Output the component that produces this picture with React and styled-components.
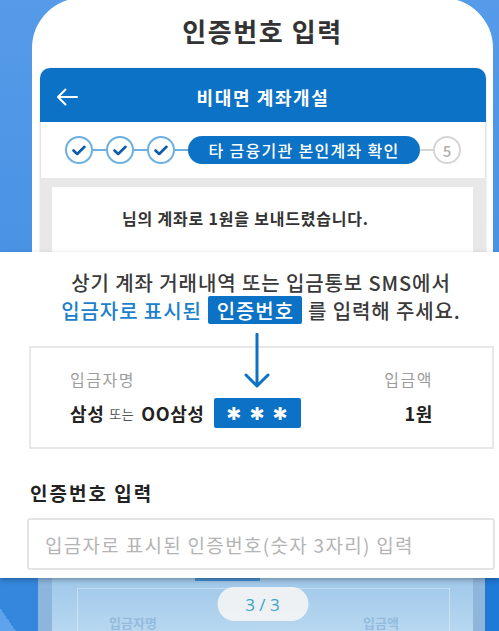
import React from 'react';
import styled, { createGlobalStyle } from 'styled-components';

const GlobalStyle = createGlobalStyle`
  html, body {
    margin: 0;
    padding: 0;
  }
  body {
    font-family: "Noto Sans CJK KR", "Noto Sans", sans-serif;
    background: #4f95e6;
  }
  * {
    box-sizing: border-box;
  }
`;

const Screen = styled.div`
  width: 499px;
  height: 631px;
  overflow: hidden;
  display: flex;
  flex-direction: column;
  background: #4f95e6;
`;

// ---- phone mockup (top, cut by the overlay) ----
const Top = styled.div`
  flex: none;
  height: 252px;
  overflow: hidden;
  padding-left: 32px;
  background: linear-gradient(180deg, #559be9, #4a92e4);
`;

const Phone = styled.div`
  width: 461px;
  height: 300px;
  margin-top: -2px;
  background: #fff;
  border-radius: 50px 50px 0 0;
  display: flex;
  flex-direction: column;
`;

const PhoneTitle = styled.h1`
  margin: 0;
  height: 70px;
  padding-bottom: 6px;
  flex: none;
  display: flex;
  align-items: center;
  justify-content: center;
  font-size: 26px;
  font-weight: 700;
  color: #333;
  letter-spacing: 1.6px;
`;

const AppCard = styled.div`
  flex: 1;
  margin: 0 7px 0 8px;
  border-radius: 10px 10px 0 0;
  overflow: hidden;
  display: flex;
  flex-direction: column;
  box-shadow: 0 0 2px rgba(0, 0, 0, 0.18);
`;

const AppHeader = styled.div`
  flex: none;
  height: 54px;
  padding-top: 3px;
  background: #0b72c5;
  display: grid;
  grid-template-columns: 60px 1fr 60px;
  align-items: center;
`;

const BackButton = styled.span`
  display: flex;
  padding-left: 16px;
`;

const AppTitle = styled.span`
  text-align: center;
  color: #fff;
  font-size: 18px;
  font-weight: 700;
  letter-spacing: 1.6px;
`;

const Steps = styled.div`
  flex: none;
  height: 56px;
  background: #fff;
  border-left: 1px solid #e2e2e2;
  border-right: 1px solid #e2e2e2;
  display: flex;
  align-items: center;
  justify-content: center;
`;

const StepCircle = styled.span`
  width: 28px;
  height: 28px;
  flex: none;
  border-radius: 50%;
  border: 2px solid ${(p) => (p.$todo ? '#d6d6d6' : '#6cafe1')};
  background: #fff;
  display: flex;
  align-items: center;
  justify-content: center;
  color: #b0b0b0;
  font-size: 15px;
  font-weight: 500;
`;

const Connector = styled.span`
  width: 13px;
  height: 2px;
  flex: none;
  background: ${(p) => (p.$todo ? '#d6d6d6' : '#6cafe1')};
`;

const CurrentStep = styled.span`
  width: 232px;
  height: 28px;
  flex: none;
  border-radius: 14px;
  background: #0b72c5;
  color: #fff;
  font-size: 16px;
  font-weight: 500;
  display: flex;
  align-items: center;
  justify-content: center;
  letter-spacing: 1.3px;
`;

const GrayArea = styled.div`
  flex: 1;
  background: #e8e8e8;
  padding: 9px 13px 0 12px;
`;

const NoticeCard = styled.div`
  height: 120px;
  background: #fff;
  padding: 20px 0 0 70px;
  font-size: 16px;
  line-height: 22px;
  font-weight: 700;
  color: #333;
  letter-spacing: 0.8px;
`;

// ---- white overlay ----
const Overlay = styled.section`
  position: relative;
  z-index: 1;
  flex: none;
  height: 326px;
  background: #fff;
  box-shadow: 0 2px 5px rgba(0, 0, 0, 0.28);
  padding: 16px 5px 0 28px;
`;

const Line = styled.div`
  height: 28px;
  display: flex;
  align-items: center;
  justify-content: center;
  gap: 6px;
  font-size: 20px;
  font-weight: 500;
  color: #3a3a3a;
  letter-spacing: 0.9px;
  white-space: nowrap;
`;

const BlueText = styled.span`
  color: #1b7fcb;
`;

const KeyBox = styled.span`
  height: 28px;
  padding: 0 8px 0 9px;
  border-radius: 2px;
  background: #0b72c5;
  color: #fff;
  display: flex;
  align-items: center;
`;

const InfoBox = styled.div`
  margin: 22px 0 0 1px;
  height: 103px;
  border: 2px solid #e8e8e8;
  padding: 20px 59px 0 39px;
`;

const InfoRow = styled.div`
  display: flex;
  align-items: center;
  justify-content: space-between;
  height: ${(p) => p.$h}px;
  margin-top: ${(p) => p.$mt || 0}px;
`;

const InfoLabel = styled.span`
  font-size: 16px;
  color: #9c9c9c;
  letter-spacing: 1.5px;
`;

const NameGroup = styled.span`
  display: flex;
  align-items: center;
`;

const Strong = styled.span`
  font-size: 18px;
  font-weight: 700;
  color: #222;
  letter-spacing: 0.6px;
`;

const Small = styled.span`
  font-size: 13px;
  color: #555;
  margin: 0 7px 0 5px;
  letter-spacing: 0.5px;
`;

const SecretBox = styled.span`
  position: relative;
  width: 87px;
  height: 30px;
  margin-left: 9px;
  border-radius: 2px;
  background: #0b72c5;
  color: #fff;
  display: flex;
  align-items: center;
  justify-content: center;
  gap: 8px;
  font-family: "DejaVu Sans", sans-serif;
  font-size: 18px;
  font-weight: 700;
`;

const Pointer = styled.svg`
  position: absolute;
  left: 50%;
  bottom: calc(100% + 9px);
  transform: translateX(-50%);
`;

const SectionLabel = styled.div`
  margin: 31px 0 0 2px;
  font-size: 19px;
  line-height: 26px;
  font-weight: 700;
  color: #222;
  letter-spacing: 2px;
`;

const CodeInput = styled.input`
  display: block;
  margin: 12px 0 0 -1px;
  width: 468px;
  height: 52px;
  border: 2px solid #e4e4e4;
  border-radius: 3px;
  padding: 0 0 0 16px;
  font-family: "Noto Sans CJK KR", "Noto Sans", sans-serif;
  font-size: 19px;
  color: #333;
  outline: none;
  letter-spacing: 1.3px;

  &::placeholder {
    color: #b4b4b4;
  }
`;

// ---- blurred phone continuation ----
const Bottom = styled.div`
  flex: 1;
  display: flex;
`;

const SideBlue = styled.div`
  width: ${(p) => p.$w}px;
  flex: none;
  background: ${(p) => p.$bg};
`;

const Inner = styled.div`
  position: relative;
  flex: 1;
  background: linear-gradient(180deg, #9fc8ea, #bfdcf2);
`;

const BlurBar = styled.div`
  margin-left: 143px;
  width: 65px;
  height: 3px;
  background: #2f7fc8;
  opacity: 0.8;
`;

const FaintBox = styled.div`
  margin: 7px 23px 0 25px;
  height: 60px;
  border: 1px solid rgba(255, 255, 255, 0.35);
  padding: 26px 50px 0 31px;
  display: flex;
  justify-content: space-between;
  font-size: 13px;
  font-weight: 700;
  line-height: 16px;
  color: rgba(120, 165, 205, 0.55);
`;

const PagePill = styled.div`
  position: absolute;
  top: 9px;
  left: 50%;
  transform: translateX(-50%);
  width: 91px;
  height: 34px;
  border-radius: 17px;
  background: rgba(240, 242, 244, 0.96);
  display: flex;
  align-items: center;
  justify-content: center;
  font-family: "Open Sans", sans-serif;
  font-size: 17px;
  color: #3ba3c6;
`;

const Check = () => (
  <svg width="14" height="11" viewBox="0 0 14 11">
    <polyline
      points="1.5,5.5 5.2,9 12.5,1.8"
      fill="none"
      stroke="#0d5ca8"
      strokeWidth="2.6"
      strokeLinecap="round"
      strokeLinejoin="round"
    />
  </svg>
);

export default function App() {
  return (
    <Screen>
      <GlobalStyle />
      <Top>
        <Phone>
          <PhoneTitle>인증번호 입력</PhoneTitle>
          <AppCard>
            <AppHeader>
              <BackButton>
                <svg width="22" height="18" viewBox="0 0 22 18">
                  <path
                    d="M21 9H2M9.5 1.5 2 9l7.5 7.5"
                    fill="none"
                    stroke="#fff"
                    strokeWidth="2"
                    strokeLinecap="round"
                    strokeLinejoin="round"
                  />
                </svg>
              </BackButton>
              <AppTitle>비대면 계좌개설</AppTitle>
              <span />
            </AppHeader>
            <Steps>
              <StepCircle><Check /></StepCircle>
              <Connector />
              <StepCircle><Check /></StepCircle>
              <Connector />
              <StepCircle><Check /></StepCircle>
              <Connector />
              <CurrentStep>타 금융기관 본인계좌 확인</CurrentStep>
              <Connector $todo />
              <StepCircle $todo>5</StepCircle>
            </Steps>
            <GrayArea>
              <NoticeCard>님의 계좌로 1원을 보내드렸습니다.</NoticeCard>
            </GrayArea>
          </AppCard>
        </Phone>
      </Top>

      <Overlay>
        <Line>상기 계좌 거래내역 또는 입금통보 SMS에서</Line>
        <Line>
          <BlueText>입금자로 표시된</BlueText>
          <KeyBox>인증번호</KeyBox>
          <span>를 입력해 주세요.</span>
        </Line>
        <InfoBox>
          <InfoRow $h={22}>
            <InfoLabel>입금자명</InfoLabel>
            <InfoLabel>입금액</InfoLabel>
          </InfoRow>
          <InfoRow $h={30} $mt={8}>
            <NameGroup>
              <Strong>삼성</Strong>
              <Small>또는</Small>
              <Strong>OO삼성</Strong>
              <SecretBox>
                <Pointer width="26" height="56" viewBox="0 0 26 56">
                  <path
                    d="M13 1v52M2 42l11 11 11-11"
                    fill="none"
                    stroke="#0b72c5"
                    strokeWidth="3"
                    strokeLinecap="round"
                    strokeLinejoin="round"
                  />
                </Pointer>
                <span>✱</span>
                <span>✱</span>
                <span>✱</span>
              </SecretBox>
            </NameGroup>
            <Strong>1원</Strong>
          </InfoRow>
        </InfoBox>
        <SectionLabel>인증번호 입력</SectionLabel>
        <CodeInput placeholder="입금자로 표시된 인증번호(숫자 3자리) 입력" />
      </Overlay>

      <Bottom>
        <SideBlue $w={38} $bg="linear-gradient(55deg, #5ea4ec 0 32%, #3587dd 32%)" />
        <SideBlue $w={14} $bg="#8cb6de" />
        <Inner>
          <BlurBar />
          <FaintBox>
            <span>입금자명</span>
            <span>입금액</span>
          </FaintBox>
          <PagePill>3 / 3</PagePill>
        </Inner>
        <SideBlue $w={12} $bg="#8fb5da" />
        <SideBlue $w={14} $bg="#1f79d6" />
      </Bottom>
    </Screen>
  );
}
